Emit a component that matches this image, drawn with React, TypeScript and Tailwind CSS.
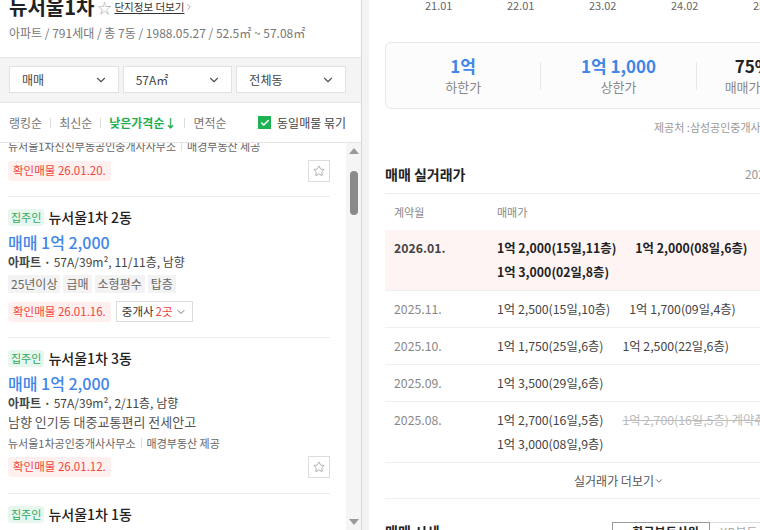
import { ChevronDown, ChevronRight, Star, Check } from 'lucide-react';

type Listing = {
  id: string;
  dong: string;
  price: string;
  spec: string;
  desc?: string;
  tags?: string[];
  agency?: string;
  confirmed: string;
  brokers?: number;
};

const listings: Listing[] = [
  {
    id: '2',
    dong: '뉴서울1차 2동',
    price: '매매 1억 2,000',
    spec: '57A/39m², 11/11층, 남향',
    tags: ['25년이상', '급매', '소형평수', '탑층'],
    confirmed: '26.01.16.',
    brokers: 2
  },
  {
    id: '3',
    dong: '뉴서울1차 3동',
    price: '매매 1억 2,000',
    spec: '57A/39m², 2/11층, 남향',
    desc: '남향 인기동 대중교통편리 전세안고',
    agency: '뉴서울1차공인중개사사무소',
    confirmed: '26.01.12.'
  },
  {
    id: '1',
    dong: '뉴서울1차 1동',
    price: '매매 1억 2,000',
    spec: '57A/39m², 5/11층, 남향',
    confirmed: '26.01.10.'
  }
];

type Deal = { text: string; cancelled?: boolean };
type DealRow = { month: string; deals: Deal[]; highlight?: boolean };

const deals: DealRow[] = [
  {
    month: '2026.01.',
    highlight: true,
    deals: [{ text: '1억 2,000(15일,11층)' }, { text: '1억 2,000(08일,6층)' }, { text: '1억 3,000(02일,8층)' }]
  },
  { month: '2025.11.', deals: [{ text: '1억 2,500(15일,10층)' }, { text: '1억 1,700(09일,4층)' }] },
  { month: '2025.10.', deals: [{ text: '1억 1,750(25일,6층)' }, { text: '1억 2,500(22일,6층)' }] },
  { month: '2025.09.', deals: [{ text: '1억 3,500(29일,6층)' }] },
  {
    month: '2025.08.',
    deals: [
      { text: '1억 2,700(16일,5층)' },
      { text: '1억 2,700(16일,5층) 계약취소', cancelled: true },
      { text: '1억 3,000(08일,9층)' }
    ]
  }
];

function Select({ label }: { label: string }) {
  return (
    <div className="flex h-[27px] flex-1 items-center justify-between border border-[#e2e2e2] bg-white pl-[12px] pr-[10px] text-[12px] text-[#444]">
      <span>{label}</span>
      <ChevronDown className="h-[14px] w-[14px] text-[#555]" strokeWidth={2} />
    </div>
  );
}

function ConfirmBadge({ date }: { date: string }) {
  return (
    <span className="inline-flex h-[20px] items-center rounded-[3px] bg-[#fff0f0] px-[5px] text-[11.5px] text-[#f0443c]">
      확인매물 {date}
    </span>
  );
}

function StarBox() {
  return (
    <div className="flex h-[22px] w-[22px] items-center justify-center border border-[#dcdcdc] bg-white">
      <Star className="h-[12px] w-[12px] text-[#999]" strokeWidth={1.6} />
    </div>
  );
}

function ListingCard({ item }: { item: Listing }) {
  return (
    <div className="border-b border-[#ececec] pb-[15px] pt-[11px]">
      <div className="flex h-[18px] items-center gap-[4px]">
        <span className="inline-flex h-[17px] items-center rounded-[3px] bg-[#e8f7ee] px-[3px] text-[11px] text-[#2ca862]">
          집주인
        </span>
        <span className="text-[14px] font-medium text-[#222]">{item.dong}</span>
      </div>
      <div className="mt-[6px] text-[16px] font-medium leading-[20px] text-[#3f86e8]">{item.price}</div>
      <div className="mt-[1px] text-[12px] leading-[18px] text-[#444]">
        <span className="font-bold">아파트 · </span>
        {item.spec}
      </div>
      {item.desc && <div className="mt-[1px] text-[13px] leading-[18px] text-[#555]">{item.desc}</div>}
      {item.tags && (
        <div className="mt-[4px] flex gap-[3px]">
          {item.tags.map((tag) => (
            <span className="bg-[#f3f3f3] px-[3px] text-[12px] leading-[18px] text-[#666]" key={tag}>
              {tag}
            </span>
          ))}
        </div>
      )}
      {item.agency && (
        <div className="mt-[4px] flex h-[16px] items-center text-[11px] text-[#666]">
          <span>{item.agency}</span>
          <span className="mx-[5px] h-[10px] w-px bg-[#ddd]" />
          <span>매경부동산 제공</span>
        </div>
      )}
      <div className={`${item.tags ? 'mt-[8px]' : 'mt-[5px]'} flex items-center justify-between`}>
        <div className="flex items-center gap-[5px]">
          <ConfirmBadge date={item.confirmed} />
          {item.brokers && (
            <span className="inline-flex h-[21px] items-center gap-[2px] border border-[#dcdcdc] px-[5px] text-[11.5px] text-[#333]">
              중개사 <span className="text-[#f0443c]">{item.brokers}곳</span>
              <ChevronDown className="h-[12px] w-[12px] text-[#777]" />
            </span>
          )}
        </div>
        {!item.brokers && <StarBox />}
      </div>
    </div>
  );
}

function LeftPanel() {
  return (
    <div className="flex h-[530px] w-[362px] shrink-0 flex-col border-r border-[#d8d8d8] bg-white">
      <div className="px-[9px] pb-[16px]">
        <div className="-mt-[5px] flex items-center gap-[3px]">
          <span className="text-[20px] font-bold leading-[24px] text-[#222]">뉴서울1차</span>
          <span className="text-[14px] text-[#aaa]">☆</span>
          <span className="flex items-center text-[10.5px] text-[#333] underline underline-offset-2">
            단지정보 더보기
            <ChevronRight className="h-[10px] w-[10px] text-[#999]" />
          </span>
        </div>
        <div className="mt-[6px] text-[12px] leading-[16px] text-[#777]">
          아파트 / 791세대 / 총 7동 / 1988.05.27 / 52.5㎡ ~ 57.08㎡
        </div>
      </div>
      <div className="flex gap-[4px] border-y border-[#e4e4e4] bg-[#f4f4f4] pb-[9px] pl-[9px] pr-[15px] pt-[8px]">
        <Select label="매매" />
        <Select label="57A㎡" />
        <Select label="전체동" />
      </div>
      <div className="flex h-[40px] shrink-0 items-center justify-between border-b border-[#e4e4e4] px-[9px] text-[12px] text-[#777]">
        <div className="flex items-center">
          <span>랭킹순</span>
          <span className="mx-[8px] h-[10px] w-px bg-[#ddd]" />
          <span>최신순</span>
          <span className="mx-[8px] h-[10px] w-px bg-[#ddd]" />
          <span className="font-bold text-[#1fae4f]">낮은가격순↓</span>
          <span className="mx-[8px] h-[10px] w-px bg-[#ddd]" />
          <span>면적순</span>
        </div>
        <div className="flex items-center gap-[6px] pr-[6px] text-[#444]">
          <span className="flex h-[13px] w-[13px] items-center justify-center bg-[#1fb255]">
            <Check className="h-[10px] w-[10px] text-white" strokeWidth={3.5} />
          </span>
          <span>동일매물 묶기</span>
        </div>
      </div>
      <div className="flex min-h-0 flex-1">
        <div className="min-w-0 flex-1 overflow-hidden pl-[8px] pr-[16px]">
          <div className="-mt-[5px] border-b border-[#ececec] pb-[14px]">
            <div className="flex items-center text-[11px] leading-[16px] text-[#666]">
              <span>뉴서울1차신신부동공인중개사사무소</span>
              <span className="mx-[5px] h-[10px] w-px bg-[#ddd]" />
              <span>매경부동산 제공</span>
            </div>
            <div className="mt-[6px] flex items-center justify-between">
              <ConfirmBadge date="26.01.20." />
              <StarBox />
            </div>
          </div>
          {listings.map((item) => (
            <ListingCard item={item} key={item.id} />
          ))}
        </div>
        <div className="flex w-[15px] shrink-0 flex-col items-center bg-[#f5f5f5] py-[5px]">
          <span className="h-0 w-0 border-x-[5px] border-b-[6px] border-x-transparent border-b-[#999]" />
          <span className="mt-[17px] h-[44px] w-[8px] rounded-full bg-[#8a8a8a]" />
          <span className="flex-1" />
          <span className="h-0 w-0 border-x-[5px] border-t-[6px] border-x-transparent border-t-[#999]" />
        </div>
      </div>
    </div>
  );
}

function StatCell({ value, label }: { value: string; label: string }) {
  return (
    <div className="flex flex-1 items-center">
      <div className="flex flex-1 flex-col items-center">
        <span className="text-[17px] font-bold leading-[22px] text-[#3f86e8]">{value}</span>
        <span className="mt-[1px] text-[13px] leading-[18px] text-[#888]">{label}</span>
      </div>
      <span className="h-[28px] w-px bg-[#e8e8e8]" />
    </div>
  );
}

function RightPanel() {
  return (
    <div className="h-[530px] w-[500px] shrink-0 bg-white px-[16px]">
      <div className="-mt-[3px] flex pl-[40px] text-[11px] leading-[16px] text-[#666]">
        {['21.01', '22.01', '23.02', '24.02', '25.02'].map((d) => (
          <span className="w-[82px]" key={d}>
            {d}
          </span>
        ))}
      </div>
      <div className="mt-[29px] flex h-[67px] items-center rounded-[6px] border border-[#e8e8e8] bg-[#fcfcfd]">
        <StatCell label="하한가" value="1억" />
        <StatCell label="상한가" value="1억 1,000" />
        <div className="flex flex-1 flex-col">
          <span className="pl-[38px] text-[17px] font-bold leading-[22px] text-[#222]">75%</span>
          <span className="mt-[1px] pl-[28px] text-[13px] leading-[18px] text-[#888]">매매가 대비</span>
        </div>
      </div>
      <div className="mt-[10px] pl-[269px] text-[11px] leading-[16px] text-[#999]">제공처 :삼성공인중개사사무소</div>
      <div className="mt-[29px] flex items-center justify-between pb-[9px]">
        <span className="text-[14px] font-bold leading-[20px] text-[#222]">매매 실거래가</span>
        <span className="pr-[20px] text-[12px] text-[#999]">2026.01.20. 기준</span>
      </div>
      <div className="border-t border-[#ebebeb]">
        <div className="flex h-[36px] items-center text-[11px] text-[#888]">
          <span className="w-[112px] pl-[9px]">계약월</span>
          <span>매매가</span>
        </div>
        {deals.map((row) => (
          <div
            className={`flex border-b border-[#efefef] py-[6px] text-[12.3px] leading-[24px] ${
              row.highlight ? 'bg-[#fff4f4] font-bold text-[#222]' : 'text-[#444]'
            }`}
            key={row.month}
          >
            <span className={`w-[112px] shrink-0 pl-[9px] ${row.highlight ? 'text-[#444]' : 'text-[#888]'}`}>{row.month}</span>
            <div className="flex flex-1 flex-wrap gap-x-[19px]">
              {row.deals.map((d) => (
                <span className={d.cancelled ? 'text-[#bbb] line-through' : ''} key={d.text}>
                  {d.text}
                </span>
              ))}
            </div>
          </div>
        ))}
        <div className="flex h-[36px] items-center justify-center border-b border-[#efefef] text-[12px] text-[#555]">
          실거래가 더보기
          <ChevronDown className="h-[10px] w-[10px]" />
        </div>
      </div>
      <div className="mt-[22px] flex items-center">
        <span className="text-[14px] font-bold text-[#222]">매매 시세</span>
        <div className="ml-[172px] flex text-[12px]">
          <span className="border border-[#999] px-[10px] font-bold text-[#222]">· 한국부동산원</span>
          <span className="border border-l-0 border-[#ddd] px-[10px] text-[#aaa]">KB부동산</span>
        </div>
      </div>
    </div>
  );
}

export default function App() {
  return (
    <div
      className="flex h-[530px] w-[760px] overflow-hidden bg-[#f3f3f3]"
      style={{ fontFamily: '"Noto Sans CJK KR", "Noto Sans", sans-serif' }}
    >
      <LeftPanel />
      <div className="w-[7px] shrink-0 bg-[#f3f3f3]" />
      <RightPanel />
    </div>
  );
}
